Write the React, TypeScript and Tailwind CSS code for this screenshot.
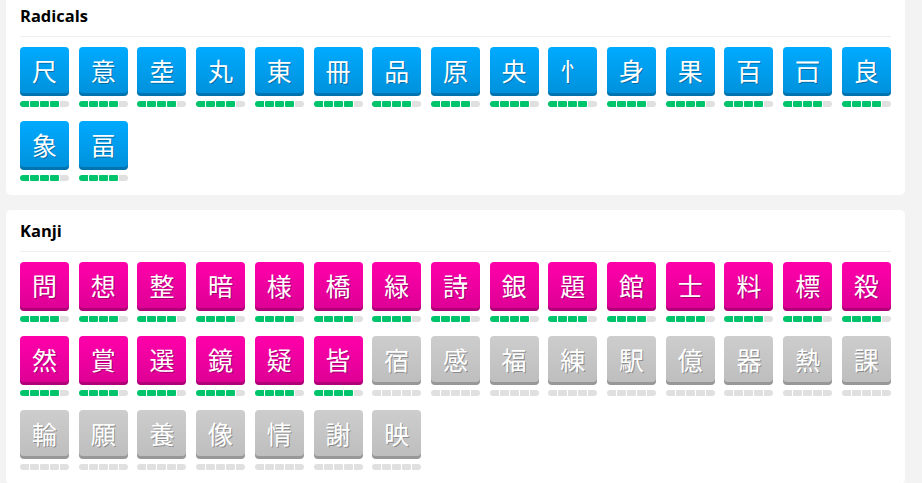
import React from 'react';

type Kind = 'radical' | 'kanji' | 'locked';

interface Item {
  char: string;
  kind: Kind;
  level: number;
}

const radicals: Item[] = [
  '尺', '意', '坴', '丸', '東', '冊', '品', '原', '央', '忄', '身', '果', '百', '𠮛', '良', '象', '畐',
].map(char => ({ char, kind: 'radical', level: 4 }));

const learnedKanji = [
  '問', '想', '整', '暗', '様', '橋', '緑', '詩', '銀', '題', '館', '士', '料', '標', '殺',
  '然', '賞', '選', '鏡', '疑', '皆',
];
const lockedKanji = ['宿', '感', '福', '練', '駅', '億', '器', '熱', '課', '輪', '願', '養', '像', '情', '謝', '映'];

const kanji: Item[] = [
  ...learnedKanji.map(char => ({ char, kind: 'kanji' as Kind, level: 4 })),
  ...lockedKanji.map(char => ({ char, kind: 'locked' as Kind, level: 0 })),
];

const tileStyles: Record<Kind, string> = {
  radical: 'bg-linear-to-b from-[#00aaff] to-[#0090da]',
  kanji: 'bg-linear-to-b from-[#ff00aa] to-[#dc0094]',
  locked: 'bg-linear-to-b from-[#cdcdcd] to-[#bdbdbd]',
};

function ProgressBar({ level }: { level: number }) {
  return (
    <div className="mt-[5px] flex gap-px h-[6px]">
      {[0, 1, 2, 3, 4].map(i => (
        <div
          key={i}
          className={`flex-1 rounded-[1px] ${i === 0 ? 'rounded-l-full' : ''} ${i === 4 ? 'rounded-r-full' : ''} ${
            i < level ? 'bg-[#00c46c]' : 'bg-[#e0e0e0]'
          }`}
        />
      ))}
    </div>
  );
}

function Tile({ item }: { item: Item }) {
  return (
    <div className="w-[49px]">
      <div
        className={`h-[49px] rounded-[4px] pb-[3px] flex items-center justify-center shadow-[inset_0_-3px_0_rgba(0,0,0,0.2)] ${tileStyles[item.kind]}`}
      >
        <span className="text-white text-[25px] leading-none font-['Noto_Sans_CJK_JP',sans-serif] [text-shadow:1px_1px_0_rgba(0,0,0,0.3)]">
          {item.char}
        </span>
      </div>
      <ProgressBar level={item.level} />
    </div>
  );
}

function Section({ title, items, className = '' }: { title: string; items: Item[]; className?: string }) {
  return (
    <div className={`bg-white rounded-[5px] px-[14px] pt-[11px] pb-[14px] ${className}`}>
      <h2 className="h-[20px] leading-[20px] text-[16.5px] font-bold text-black font-['Open_Sans',sans-serif]">
        {title}
      </h2>
      <div className="mt-[10px] border-b border-[#eeeeee]" />
      <div className="mt-[10px] grid grid-cols-[repeat(15,49px)] justify-between gap-y-[14px]">
        {items.map((item, i) => (
          <Tile key={i} item={item} />
        ))}
      </div>
    </div>
  );
}

export default function App() {
  return (
    <div className="min-h-screen bg-[#f3f3f3] pl-[6px] pr-[17px] overflow-hidden h-[483px]">
      <Section title="Radicals" items={radicals} className="-mt-[5px]" />
      <Section title="Kanji" items={kanji} className="mt-[15px]" />
    </div>
  );
}
